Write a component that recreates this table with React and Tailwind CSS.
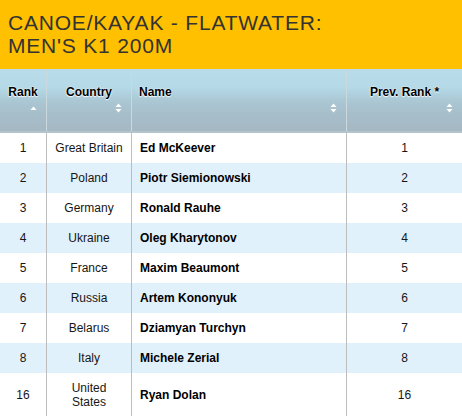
import React from 'react';

const rows = [
  { rank: 1, country: 'Great Britain', name: 'Ed McKeever', prev: 1 },
  { rank: 2, country: 'Poland', name: 'Piotr Siemionowski', prev: 2 },
  { rank: 3, country: 'Germany', name: 'Ronald Rauhe', prev: 3 },
  { rank: 4, country: 'Ukraine', name: 'Oleg Kharytonov', prev: 4 },
  { rank: 5, country: 'France', name: 'Maxim Beaumont', prev: 5 },
  { rank: 6, country: 'Russia', name: 'Artem Kononyuk', prev: 6 },
  { rank: 7, country: 'Belarus', name: 'Dziamyan Turchyn', prev: 7 },
  { rank: 8, country: 'Italy', name: 'Michele Zerial', prev: 8 },
  { rank: 16, country: 'United States', name: 'Ryan Dolan', prev: 16 },
];

const SortIcon = ({ asc }) => (
  <svg width="7" height="10" viewBox="0 0 7 10" className="block">
    {asc ? (
      <path d="M0.5 7 L3.5 3.5 L6.5 7 Z" fill="#fff" />
    ) : (
      <>
        <path d="M0.5 4 L3.5 0.5 L6.5 4 Z" fill="#fff" />
        <path d="M0.5 6 L3.5 9.5 L6.5 6 Z" fill="#fff" />
      </>
    )}
  </svg>
);

const HeadCell = ({ label, align = 'center', asc, last }) => (
  <div
    className={`flex flex-col pt-[16px] ${last ? '' : 'border-r border-[#cbd8de]'}`}
  >
    <div
      className={`h-[14px] leading-[14px] text-[12px] font-bold text-black [text-shadow:0_0_2px_#fff,0_1px_1px_#fff] ${
        align === 'left' ? 'text-left pl-[7px]' : 'text-center'
      }`}
    >
      {label}
    </div>
    <div className="flex justify-end pr-[9px] mt-[4px]">
      <SortIcon asc={asc} />
    </div>
  </div>
);

export default function App() {
  return (
    <div className="w-[462px] h-[416px] overflow-hidden bg-white font-['Liberation_Sans',Arial,sans-serif]">
      {/* Title bar */}
      <div className="bg-[#ffc000] h-[69px] pt-[11px] pl-[8px]">
        <h1 className="text-[21px] leading-[23px] tracking-[0.8px] text-[#333] uppercase font-normal">
          Canoe/Kayak - Flatwater:
          <br />
          Men's K1 200M
        </h1>
      </div>

      {/* Table header */}
      <div className="grid grid-cols-[47px_85px_215px_115px] h-[64px] border-b-2 border-[#b3c4cd] bg-[linear-gradient(to_bottom,#b8dcea_0%,#b5d9e7_30%,#aac7d3_52%,#a7bfcb_70%,#a5b8c4_100%)]">
        <HeadCell label="Rank" asc />
        <HeadCell label="Country" />
        <HeadCell label="Name" align="left" />
        <HeadCell label="Prev. Rank *" last />
      </div>

      {/* Table body */}
      <div className="flex flex-col">
        {rows.map((r, i) => (
          <div
            key={r.rank}
            className={`grid grid-cols-[47px_85px_215px_115px] text-[12px] leading-[14px] text-[#161616] ${
              i % 2 === 1 ? 'bg-[#e1f1fb]' : 'bg-white'
            }`}
          >
            <div className="flex items-center justify-center py-[8px] border-r border-[#bdbdbd]">
              {r.rank}
            </div>
            <div className="flex items-center justify-center text-center py-[8px] px-[2px] border-r border-[#bdbdbd]">
              {r.country === 'United States' ? (
                <span>
                  United
                  <br />
                  States
                </span>
              ) : (
                r.country
              )}
            </div>
            <div className="flex items-center pl-[8px] py-[8px] font-bold text-black border-r border-[#bdbdbd]">
              {r.name}
            </div>
            <div className="flex items-center justify-center py-[8px]">{r.prev}</div>
          </div>
        ))}
      </div>
    </div>
  );
}
